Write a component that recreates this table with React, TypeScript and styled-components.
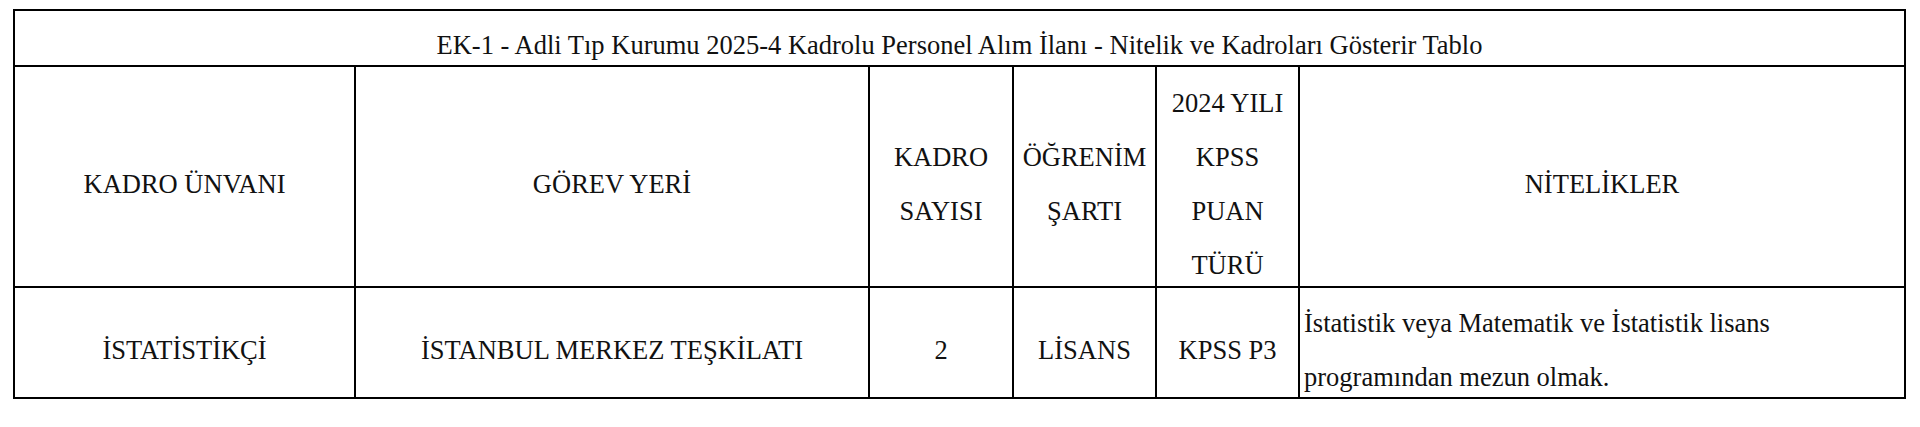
import styled, { createGlobalStyle } from "styled-components";

const GlobalStyle = createGlobalStyle`
  body {
    margin: 0;
    background: #ffffff;
  }

  body, table, td {
    font-family: "Liberation Serif", serif !important;
  }
`;

const Page = styled.div`
  padding: 9px 0 0 13px;
`;

const Table = styled.table`
  width: 1893px;
  border-collapse: collapse;
  table-layout: fixed;
  font-family: "Liberation Serif", serif;
  font-size: 26.5px;
  color: #111;
`;

const Row = styled.tr<{ $height: number }>`
  height: ${(p) => p.$height}px;
`;

const Cell = styled.td<{ $align?: "left" | "center"; $lineHeight?: number }>`
  border: 2px solid #000;
  padding: 0 4px;
  font-family: "Liberation Serif", serif;
  text-align: ${(p) => p.$align ?? "center"};
  vertical-align: middle;
  line-height: ${(p) => p.$lineHeight ?? 54}px;
`;

// text sits a few px below the middle of each cell
const CellText = styled.div`
  padding-top: 7px;
  margin-bottom: -7px;
  font-family: "Liberation Serif", serif;
`;

const columns = [341, 514, 144, 143, 143, 606];

const App = () => {
  return (
    <Page>
      <GlobalStyle />
      <Table>
        <colgroup>
          {columns.map((w, i) => (
            <col key={i} style={{ width: w }} />
          ))}
        </colgroup>
        <tbody>
          <Row $height={56}>
            <Cell colSpan={6} $lineHeight={36}>
              <CellText>
                EK-1 - Adli Tıp Kurumu 2025-4 Kadrolu Personel Alım İlanı - Nitelik ve Kadroları Gösterir Tablo
              </CellText>
            </Cell>
          </Row>
          <Row $height={221}>
            <Cell>
              <CellText>KADRO ÜNVANI</CellText>
            </Cell>
            <Cell>
              <CellText>GÖREV YERİ</CellText>
            </Cell>
            <Cell>
              <CellText>
                KADRO
                <br />
                SAYISI
              </CellText>
            </Cell>
            <Cell>
              <CellText>
                ÖĞRENİM
                <br />
                ŞARTI
              </CellText>
            </Cell>
            <Cell>
              <CellText>
                2024 YILI
                <br />
                KPSS
                <br />
                PUAN
                <br />
                TÜRÜ
              </CellText>
            </Cell>
            <Cell>
              <CellText>NİTELİKLER</CellText>
            </Cell>
          </Row>
          <Row $height={111}>
            <Cell>
              <CellText>İSTATİSTİKÇİ</CellText>
            </Cell>
            <Cell>
              <CellText>İSTANBUL MERKEZ TEŞKİLATI</CellText>
            </Cell>
            <Cell>
              <CellText>2</CellText>
            </Cell>
            <Cell>
              <CellText>LİSANS</CellText>
            </Cell>
            <Cell>
              <CellText>KPSS P3</CellText>
            </Cell>
            <Cell $align="left">
              <CellText>
                İstatistik veya Matematik ve İstatistik lisans programından mezun olmak.
              </CellText>
            </Cell>
          </Row>
        </tbody>
      </Table>
    </Page>
  );
};

export default App;
